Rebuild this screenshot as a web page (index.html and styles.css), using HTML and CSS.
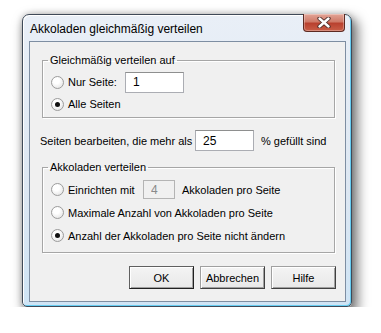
FILE: index.html
```html
<!DOCTYPE html>
<html>
<head>
    <title>Akkoladen gleichmäßig verteilen</title>
    <link rel="stylesheet" href="styles.css">
</head>
<body>
    <div class="window">
        <div class="titlebar">
            <span class="title">Akkoladen gleichmäßig verteilen</span>
            <button class="close" type="button">
                <svg width="14" height="11" viewBox="0 0 14 11">
                    <path d="M2.5 1.5 L11.5 9.5 M11.5 1.5 L2.5 9.5" stroke="#4a2a26" stroke-width="4.2" stroke-linecap="round"/>
                    <path d="M2.5 1.5 L11.5 9.5 M11.5 1.5 L2.5 9.5" stroke="#ffffff" stroke-width="2.4" stroke-linecap="round"/>
                </svg>
            </button>
        </div>

        <div class="client">
            <fieldset class="group group-pages">
                <legend>Gleichmäßig verteilen auf</legend>
                <div class="row">
                    <span class="radio"></span>
                    <span class="label label-page">Nur Seite:</span>
                    <input class="field field-page" type="text" value="1">
                </div>
                <div class="row">
                    <span class="radio on"><span class="dot"></span></span>
                    <span class="label">Alle Seiten</span>
                </div>
            </fieldset>

            <div class="fill-row">
                <span class="label label-fill">Seiten bearbeiten, die mehr als</span>
                <input class="field field-fill" type="text" value="25">
                <span class="label">% gefüllt sind</span>
            </div>

            <fieldset class="group group-systems">
                <legend>Akkoladen verteilen</legend>
                <div class="row row-tall">
                    <span class="radio"></span>
                    <span class="label label-setup">Einrichten mit</span>
                    <input class="field field-count" type="text" value="4" disabled>
                    <span class="label">Akkoladen pro Seite</span>
                </div>
                <div class="row row-tall">
                    <span class="radio"></span>
                    <span class="label">Maximale Anzahl von Akkoladen pro Seite</span>
                </div>
                <div class="row row-tall">
                    <span class="radio on"><span class="dot"></span></span>
                    <span class="label">Anzahl der Akkoladen pro Seite nicht ändern</span>
                </div>
            </fieldset>

            <div class="buttons">
                <button class="btn btn-default" type="button">OK</button>
                <button class="btn" type="button">Abbrechen</button>
                <button class="btn" type="button">Hilfe</button>
            </div>
        </div>
    </div>
</body>
</html>
```

FILE: styles.css
```css
body {
    margin: 0;
    padding: 14px 0 0 22px;
    background-color: #ffffff;
    font-family: 'Liberation Sans', Arial, sans-serif;
    font-size: 11px;
    color: #000000;
}

.window {
    display: flex;
    flex-direction: column;
    width: 330px;
    height: 293px;
    box-sizing: border-box;
    padding: 0 5px 4px 6px;
    background: linear-gradient(#e9eff7, #dde7f2 60%, #cfe4f5);
    border: 1px solid #3f4a58;
    border-radius: 7px 7px 5px 5px;
    box-shadow: inset -1px -1px 0 #66cdf2, inset 1px 1px 0 #ffffff,
        4px 6px 12px 2px rgba(0, 0, 0, 0.5), 0 0 6px rgba(0, 0, 0, 0.2);
}

.titlebar {
    display: flex;
    justify-content: space-between;
    align-items: flex-start;
    height: 26px;
}

.title {
    margin: 7px 0 0 1px;
    font-family: 'Liberation Sans', Arial, sans-serif;
    font-size: 12px;
    color: #000000;
}

.close {
    display: flex;
    align-items: center;
    justify-content: center;
    width: 42px;
    height: 18px;
    margin: -1px 1px 0 0;
    padding: 0;
    border: 1px solid #5c2a22;
    border-top: none;
    border-radius: 0 0 4px 4px;
    background: linear-gradient(#e3a597, #cf7a68 45%, #b9412f 55%, #c95e47);
    box-shadow: inset 0 0 0 1px rgba(255, 255, 255, 0.3);
}

.client {
    flex: 1;
    display: flex;
    flex-direction: column;
    background-color: #f0f0f0;
    border: 1px solid #7e8ea2;
}

.group {
    margin: 12px 10px 0 12px;
    padding: 4px 0 2px 0;
    border: 1px solid #a6a6a6;
    box-shadow: 1px 1px 0 #ffffff, inset 1px 1px 0 #ffffff;
}

.group legend {
    margin-left: 5px;
    padding: 0 2px;
    line-height: 13px;
}

.group-systems {
    margin-top: 10px;
    padding: 4px 0 5px 0;
}

.row {
    display: flex;
    align-items: center;
    height: 22px;
    padding-left: 8px;
}

.row-tall {
    height: 23px;
}

.radio {
    display: inline-flex;
    align-items: center;
    justify-content: center;
    width: 13px;
    height: 13px;
    box-sizing: border-box;
    margin-right: 4px;
    border: 1px solid #9c9c9c;
    border-radius: 50%;
    background: radial-gradient(circle at 40% 35%, #ffffff 30%, #dcdcdc);
}

.dot {
    width: 5px;
    height: 5px;
    border-radius: 50%;
    background-color: #111111;
}

.label {
    white-space: nowrap;
}

.label-page {
    width: 57px;
}

.label-setup {
    width: 75px;
}

.field {
    height: 21px;
    box-sizing: border-box;
    padding: 0 0 0 7px;
    border: 1px solid #abadb3;
    border-top-color: #8e8f8f;
    background-color: #ffffff;
    font-family: 'Liberation Sans', Arial, sans-serif;
    font-size: 12px;
    color: #000000;
}

.field-page {
    width: 59px;
}

.field-fill {
    width: 59px;
    margin-right: 7px;
}

.field-count {
    width: 32px;
    height: 19px;
    margin-right: 7px;
    border-color: #b4b4b4;
    background-color: #f0f0f0;
    color: #8a8a8a;
}

.fill-row {
    display: flex;
    align-items: center;
    height: 21px;
    margin: 12px 0 0 10px;
}

.label-fill {
    width: 155px;
}

.buttons {
    display: flex;
    justify-content: flex-end;
    gap: 6px;
    margin: 13px 9px 0 0;
}

.btn {
    width: 65px;
    height: 23px;
    padding: 0;
    background: linear-gradient(#f4f4f4, #e8e8e8);
    border: 1px solid;
    border-color: #a0a0a0 #404040 #404040 #a0a0a0;
    box-shadow: inset 1px 1px 0 #ffffff, inset -1px -1px 0 #a0a0a0;
    font-family: 'Liberation Sans', Arial, sans-serif;
    font-size: 11px;
    color: #000000;
}

.btn-default {
    border-color: #606060 #202020 #202020 #606060;
}
```
